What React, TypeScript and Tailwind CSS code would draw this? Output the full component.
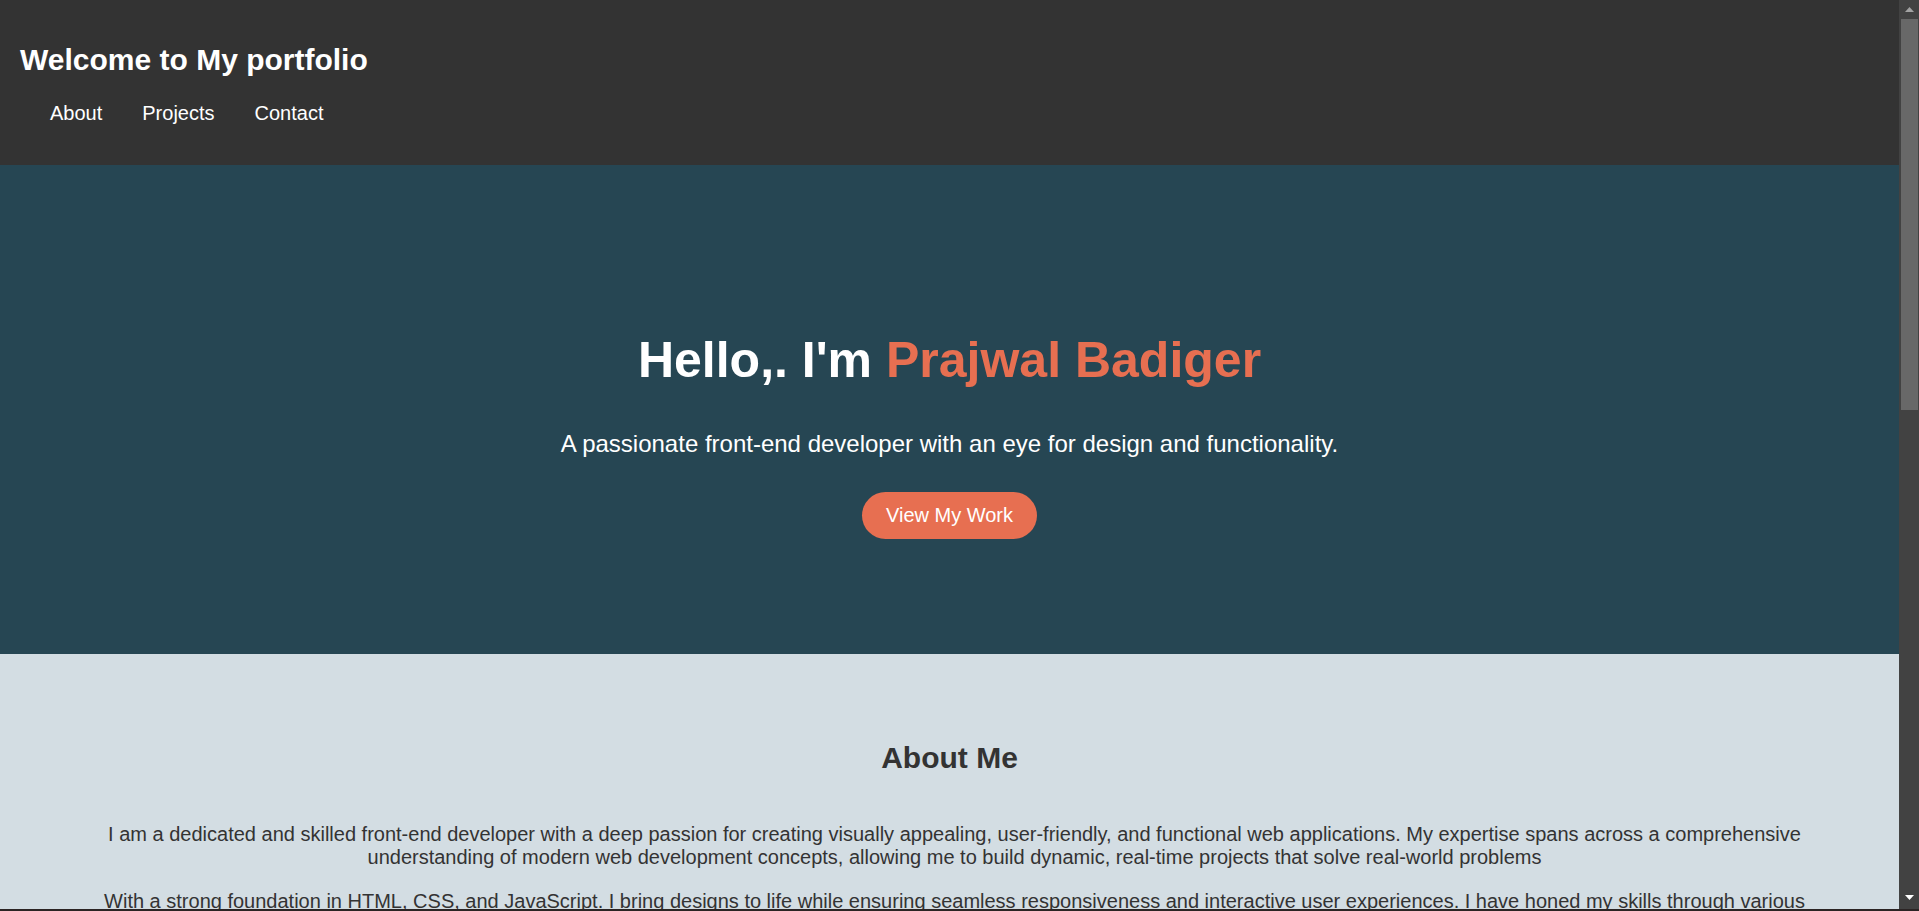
import React from "react";

/**
 * Portfolio landing page: dark header with nav, teal hero with the name
 * highlighted, and the start of the "About Me" section.
 */

const NAV = ["About", "Projects", "Contact"];

const ABOUT = [
  "I am a dedicated and skilled front-end developer with a deep passion for creating visually appealing, user-friendly, and functional web applications. My expertise spans across a comprehensive understanding of modern web development concepts, allowing me to build dynamic, real-time projects that solve real-world problems",
  "With a strong foundation in HTML, CSS, and JavaScript. I bring designs to life while ensuring seamless responsiveness and interactive user experiences. I have honed my skills through various projects, each one teaching me something new about building for the web and about the people who use it.",
];

function Scrollbar() {
  return (
    <aside className="flex w-[20px] shrink-0 flex-col bg-[#424242]">
      <div className="flex h-[19px] items-center justify-center">
        <svg width="9" height="5" viewBox="0 0 9 5" aria-hidden>
          <polygon points="4.5,0 9,5 0,5" fill="#a3a3a3" />
        </svg>
      </div>
      <div className="ml-[2px] mr-[1px] h-[391px] bg-[#686868]" />
      <div className="flex-1" />
      <div className="flex h-[19px] items-start justify-center pt-[5px]">
        <svg width="9" height="5" viewBox="0 0 9 5" aria-hidden>
          <polygon points="0,0 9,0 4.5,5" fill="#ffffff" />
        </svg>
      </div>
    </aside>
  );
}

export default function App() {
  return (
    <div className="flex h-[911px] flex-col overflow-hidden font-['Liberation_Sans',Arial,sans-serif]">
      <div className="flex min-h-0 flex-1">
        <main className="flex min-w-0 flex-1 flex-col overflow-hidden">
          {/* ===== Header ===== */}
          <header className="h-[165px] shrink-0 bg-[#333333] px-[20px] pt-[43px] text-white">
            <h1 className="text-[30px] font-bold leading-[34px]">
              Welcome to My portfolio
            </h1>
            <nav className="mt-[25px] flex gap-[40px] pl-[30px] text-[20px] leading-[23px]">
              {NAV.map((n) => (
                <a key={n} href={`#${n.toLowerCase()}`} className="text-white">
                  {n}
                </a>
              ))}
            </nav>
          </header>

          {/* ===== Hero ===== */}
          <section className="h-[489px] shrink-0 bg-[#264653] pt-[166px] text-center text-white">
            <h2 className="text-[50px] font-bold leading-[58px]">
              Hello,. I'm <span className="text-[#e76f51]">Prajwal Badiger</span>
            </h2>
            <p className="mt-[41px] text-[24px] leading-[28px]">
              A passionate front-end developer with an eye for design and
              functionality.
            </p>
            <a
              href="#projects"
              className="mt-[34px] inline-block rounded-full bg-[#e76f51] px-6 py-3 text-[20px] leading-[23px] text-white"
            >
              View My Work
            </a>
          </section>

          {/* ===== About ===== */}
          <section
            id="about"
            className="flex-1 bg-[#d3dde3] px-[80px] pt-[87px] text-center text-[#333333]"
          >
            <h3 className="text-[30px] font-bold leading-[34px]">About Me</h3>
            <div className="mt-[48px] space-y-[21px] pl-[10px] text-[20px] leading-[23px]">
              {ABOUT.map((p) => (
                <p key={p.slice(0, 12)}>{p}</p>
              ))}
            </div>
          </section>
        </main>
        <Scrollbar />
      </div>
      <div className="h-[2px] shrink-0 bg-[#2b2424]" />
    </div>
  );
}
